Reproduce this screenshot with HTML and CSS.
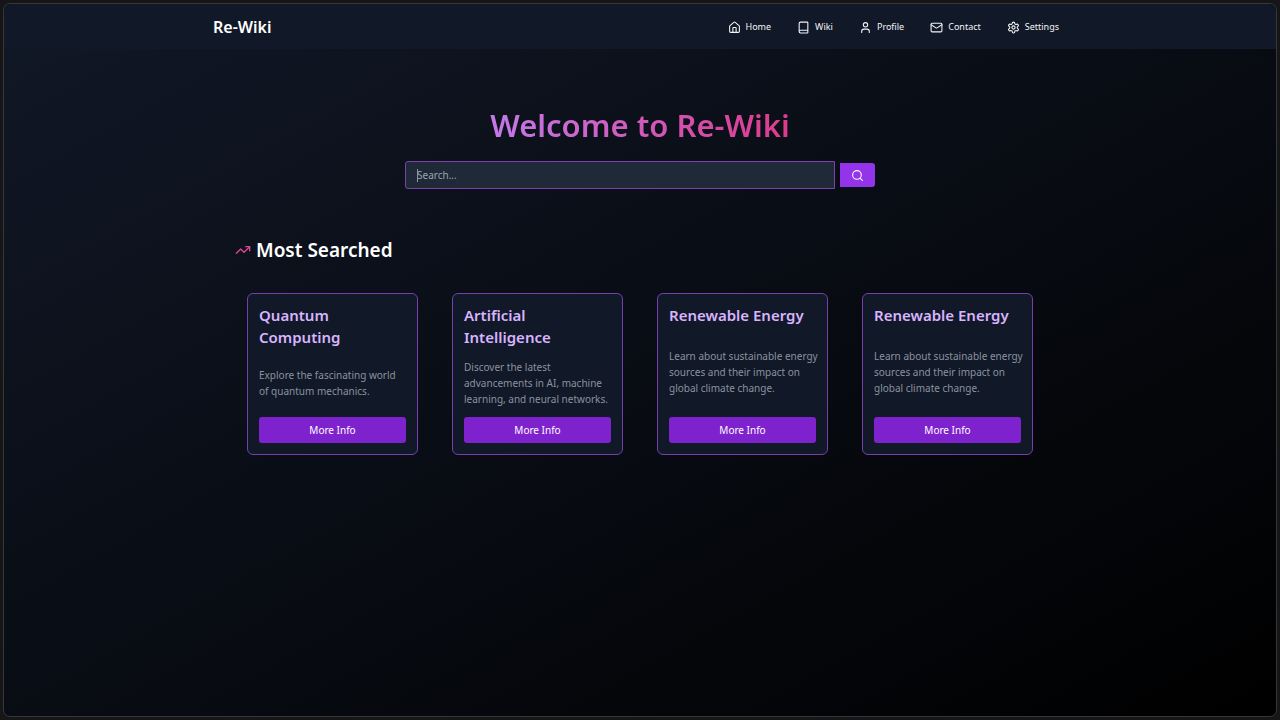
FILE: index.html
```html
<!DOCTYPE html>
<html lang="en">
<head>
<meta charset="utf-8">
<title>Re-Wiki</title>
<link rel="stylesheet" href="styles.css">
</head>
<body>
<div class="window">
  <header class="header">
    <div class="header-inner">
      <a class="brand" href="#">Re-Wiki</a>
      <nav class="nav">
        <a href="#"><svg class="icon" viewBox="0 0 24 24"><path d="M15 21v-8a1 1 0 0 0-1-1h-4a1 1 0 0 0-1 1v8"/><path d="M3 10a2 2 0 0 1 .709-1.528l7-5.999a2 2 0 0 1 2.582 0l7 5.999A2 2 0 0 1 21 10v9a2 2 0 0 1-2 2H5a2 2 0 0 1-2-2z"/></svg>Home</a>
        <a href="#"><svg class="icon" viewBox="0 0 24 24"><path d="M4 19.500v-15A2.500 2.500 0 0 1 6.500 2H19a1 1 0 0 1 1 1v18a1 1 0 0 1-1 1H6.500a1 1 0 0 1 0-5H20"/></svg>Wiki</a>
        <a href="#"><svg class="icon" viewBox="0 0 24 24"><path d="M19 21v-2a4 4 0 0 0-4-4H9a4 4 0 0 0-4 4v2"/><circle cx="12" cy="7" r="4"/></svg>Profile</a>
        <a href="#"><svg class="icon" viewBox="0 0 24 24"><rect width="20" height="16" x="2" y="4" rx="2"/><path d="m22 7-8.970 5.700a1.940 1.940 0 0 1-2.060 0L2 7"/></svg>Contact</a>
        <a href="#"><svg class="icon" viewBox="0 0 24 24"><path d="M12.220 2h-.44a2 2 0 0 0-2 2v.18a2 2 0 0 1-1 1.730l-.43.25a2 2 0 0 1-2 0l-.15-.08a2 2 0 0 0-2.730.73l-.22.38a2 2 0 0 0 .73 2.730l.15.1a2 2 0 0 1 1 1.720v.51a2 2 0 0 1-1 1.740l-.15.09a2 2 0 0 0-.73 2.730l.22.38a2 2 0 0 0 2.730.73l.15-.08a2 2 0 0 1 2 0l.43.25a2 2 0 0 1 1 1.730V20a2 2 0 0 0 2 2h.44a2 2 0 0 0 2-2v-.18a2 2 0 0 1 1-1.730l.43-.25a2 2 0 0 1 2 0l.15.08a2 2 0 0 0 2.730-.73l.22-.39a2 2 0 0 0-.73-2.730l-.15-.08a2 2 0 0 1-1-1.740v-.5a2 2 0 0 1 1-1.740l.15-.09a2 2 0 0 0 .73-2.730l-.22-.38a2 2 0 0 0-2.730-.73l-.15.08a2 2 0 0 1-2 0l-.43-.25a2 2 0 0 1-1-1.730V4a2 2 0 0 0-2-2z"/><circle cx="12" cy="12" r="3"/></svg>Settings</a>
      </nav>
    </div>
  </header>
  <main class="main">
    <h1 class="title">Welcome to Re-Wiki</h1>
    <form class="search">
      <div class="field">
        <input class="search-input" type="text" placeholder="Search..." aria-label="Search">
        <span class="caret"></span>
      </div>
      <button class="search-button" type="button" aria-label="Search"><svg class="icon" viewBox="0 0 24 24"><circle cx="11" cy="11" r="8"/><path d="m21 21-4.300-4.300"/></svg></button>
    </form>
    <section>
      <h2 class="section-title"><svg class="icon trend" viewBox="0 0 24 24"><path d="m22 7-8.500 8.500-5-5L2 17"/><path d="M16 7h6v6"/></svg>Most Searched</h2>
      <div class="cards">
        <article class="card"><h3>Quantum Computing</h3><p>Explore the fascinating world of&nbsp;quantum mechanics.</p><button type="button">More Info</button></article>
        <article class="card"><h3>Artificial Intelligence</h3><p>Discover the latest advancements in AI, machine learning, and neural networks.</p><button type="button">More Info</button></article>
        <article class="card"><h3>Renewable Energy</h3><p>Learn about sustainable energy sources and their impact on global climate change.</p><button type="button">More Info</button></article>
        <article class="card"><h3>Renewable Energy</h3><p>Learn about sustainable energy sources and their impact on global climate change.</p><button type="button">More Info</button></article>
      </div>
    </section>
  </main>
</div>
</body>
</html>
```
FILE: styles.css
```css
* { box-sizing: border-box; }

body {
  margin: 0;
  min-height: 100vh;
  padding: 3px;
  display: flex;
  background: #161616;
  color: #fff;
  font-family: "Noto Sans", "Open Sans", sans-serif;
  font-size: 10px;
  line-height: 16px;
}

h1, h2, h3, p { margin: 0; }
a { color: inherit; text-decoration: none; }
button, input { font: inherit; }

.window {
  flex: 1;
  border: 1px solid #36373b;
  border-radius: 7px;
  overflow: hidden;
  background: linear-gradient(to bottom right, #111827, #000);
}

.icon {
  width: 13px;
  height: 13px;
  flex: none;
  fill: none;
  stroke: currentColor;
  stroke-width: 2;
  stroke-linecap: round;
  stroke-linejoin: round;
}

.header { background: #111827; padding: 11px 16px 10px; }
.header-inner {
  max-width: 854px;
  margin: 0 auto;
  padding-right: 8px;
  display: flex;
  align-items: center;
  justify-content: space-between;
}
.brand { font-size: 16px; line-height: 24px; font-weight: 600; }
.nav { display: flex; gap: 26px; font-size: 9px; color: #f3f4f6; }
.nav a { display: flex; align-items: center; gap: 5px; }

.main { max-width: 810px; margin: 0 auto; padding-top: 54px; }

.title {
  width: fit-content;
  margin: 0 auto;
  font-size: 31px;
  line-height: 44px;
  font-weight: 600;
  background: linear-gradient(to right, #c27ae8, #dd3a8c);
  background-clip: text;
  color: transparent;
}

.search {
  max-width: 470px;
  margin: 14px auto 0;
  display: flex;
  align-items: center;
  gap: 5px;
}
.field { position: relative; flex: 1; display: flex; }
.search-input {
  flex: 1;
  min-width: 0;
  height: 28px;
  padding: 0 11px;
  border: 1px solid #7e3faf;
  border-radius: 3px 0 0 3px;
  background: #1f2937;
  color: #fff;
  outline: none;
}
.search-input::placeholder { color: #9ca3af; }
.caret {
  position: absolute;
  left: 12px;
  top: 8px;
  width: 1px;
  height: 13px;
  background: #8f96a3;
}
.search-button {
  display: flex;
  align-items: center;
  justify-content: center;
  width: 35px;
  height: 24px;
  padding: 0;
  border: 0;
  border-radius: 0 3px 3px 0;
  background: #9333ea;
  color: #fff;
}

.section-title {
  display: flex;
  align-items: center;
  gap: 5px;
  margin-top: 47px;
  font-size: 19px;
  line-height: 28px;
  font-weight: 600;
}
.trend { width: 16px; height: 16px; color: #db4593; }

.cards {
  display: grid;
  grid-template-columns: repeat(4, 1fr);
  gap: 34px;
  margin-top: 29px;
  padding: 0 12px;
}
.card {
  display: flex;
  flex-direction: column;
  justify-content: space-between;
  min-height: 162px;
  padding: 10px 11px 11px;
  border: 1px solid #7540ab;
  border-radius: 6px;
  background: #111827;
}
.card h3 { font-size: 15px; line-height: 22px; font-weight: 600; color: #d8b4fe; }
.card p { margin-right: -4px; color: #8b929f; }
.card button {
  height: 26px;
  padding: 0;
  border: 0;
  border-radius: 3px;
  background: #7e22ce;
  color: #fff;
}
```
